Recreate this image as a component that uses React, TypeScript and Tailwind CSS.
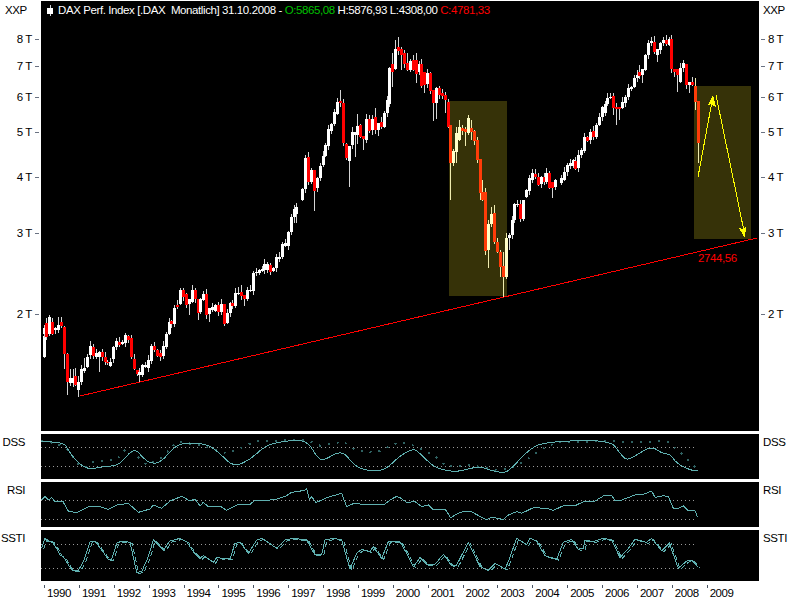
import * as React from 'react';

// candle rows as read off the chart: [x, bodyTop, bodyBottom, red, wickTop?, wickBottom?]
// a section's numbers are 3x pixels, relative to its [baseX, baseY]
type Row = [number, number, number, number, number?, number?];
type Candle = { x: number; top: number; bottom: number; red: boolean; wt: number; wb: number };

const early: Row[] = [
  [129, 408, 470, 0], [133, 385, 402, 0], [138, 370, 410, 1], [147, 352, 402, 0], [156, 365, 402, 1], [165, 385, 390, 0],
  [174, 375, 390, 0, 352], [183, 365, 378, 1, 350], [192, 381, 463, 1, 378, 508], [201, 463, 545, 1, 460, 585], [210, 535, 548, 0, 508],
  [219, 535, 548, 0, 508, 560], [225, 528, 556, 1, 505], [234, 545, 570, 0, 528, 590], [243, 508, 545, 0], [252, 505, 512, 0, 475], [261, 470, 500, 0],
  [270, 438, 465, 0], [279, 440, 467, 1, 432], [288, 460, 472, 0], [297, 455, 470, 0, 452, 515], [306, 455, 472, 1], [315, 472, 487, 1],
  [324, 485, 488, 1], [333, 485, 498, 0], [340, 442, 477, 0], [348, 422, 442, 0], [357, 425, 436, 1], [366, 425, 433, 0], [375, 405, 430, 0, 398],
  [384, 407, 420, 1], [393, 414, 472, 1], [402, 477, 507, 1], [407, 510, 522, 1, 510, 528], [416, 515, 525, 0, 505, 545], [425, 495, 525, 0], [434, 495, 500, 0],
  [443, 480, 505, 0], [452, 438, 482, 0], [461, 438, 450, 1], [470, 450, 467, 1], [479, 460, 472, 1], [488, 438, 467, 0], [497, 403, 440, 0],
  [503, 365, 402, 0], [512, 363, 372, 1], [521, 323, 372, 0], [530, 316, 322, 1], [540, 270, 312, 0, 265], [549, 270, 290, 1, 265], [558, 282, 316, 1],
  [567, 298, 312, 0, 298, 345], [576, 270, 305, 0], [585, 270, 298, 1, 265], [591, 298, 338, 1, 298, 360], [600, 296, 336, 0], [609, 282, 300, 0], [618, 282, 345, 1],
  [627, 325, 343, 0, 325, 365], [636, 322, 330, 0], [645, 315, 332, 0], [654, 316, 335, 1], [663, 312, 335, 0], [672, 312, 372, 1, 312, 378], [681, 338, 370, 0],
  [690, 310, 338, 0], [698, 310, 318, 1], [706, 278, 318, 0], [715, 278, 282, 0, 262], [724, 276, 288, 1, 255], [733, 285, 297, 1, 285, 318], [742, 270, 297, 0],
  [750, 270, 272, 0], [759, 218, 272, 0], [768, 215, 220, 0], [777, 210, 218, 0], [786, 206, 212, 0], [795, 192, 210, 0], [804, 192, 210, 0], [810, 195, 215, 1, 190, 225],
  [819, 205, 212, 0], [828, 172, 205, 0], [837, 172, 178, 0], [846, 132, 172, 0], [855, 130, 138, 0], [864, 95, 138, 0], [873, 52, 95, 0], [882, 28, 52, 0, 15, 68], [891, 20, 42, 0, 10, 68],
];

const late90s: Row[] = [
  [906, 568, 600, 0], [915, 474, 566, 0, 465], [924, 472, 545, 1], [933, 510, 545, 0], [942, 510, 572, 1, 510, 633], [951, 535, 565, 0], [960, 498, 535, 0], [966, 468, 495, 0],
  [975, 435, 468, 0], [984, 388, 438, 0], [993, 372, 392, 0], [1002, 337, 372, 0], [1011, 305, 342, 0, 295], [1020, 303, 310, 1, 270], [1029, 310, 428, 1], [1038, 432, 473, 1],
  [1047, 437, 482, 0, 437, 560], [1056, 397, 434, 0], [1064, 396, 404, 0, 396, 472], [1072, 378, 405, 0, 342, 432], [1080, 376, 412, 1], [1089, 408, 418, 1, 408, 450], [1098, 357, 420, 0],
  [1107, 357, 392, 1, 345], [1116, 357, 390, 0, 345, 405], [1125, 352, 390, 1, 325], [1134, 368, 390, 0, 368, 408], [1143, 366, 382, 1], [1152, 340, 382, 0], [1161, 300, 340, 0, 288],
  [1167, 203, 312, 0], [1176, 192, 215, 1, 160, 260], [1185, 148, 208, 0, 120], [1194, 142, 152, 1, 110],
];

const y2k: Row[] = [
  [3, 148, 165, 1, 140, 210], [12, 158, 192, 1], [21, 190, 210, 1, 160, 213], [30, 183, 210, 0], [39, 180, 210, 1, 165, 212], [46, 180, 222, 1, 160, 250], [54, 192, 216, 0], [63, 192, 258, 1],
  [72, 216, 255, 1, 216, 280], [81, 218, 252, 0], [90, 218, 272, 1], [99, 270, 310, 1, 270, 362], [108, 265, 310, 0, 260, 358], [117, 265, 285, 1], [126, 280, 288, 1], [135, 285, 300, 1, 275, 340], [142, 305, 380, 1],
  [150, 375, 488, 1, 375, 600], [159, 452, 488, 0], [168, 400, 455, 0, 380, 490], [177, 380, 420, 0, 360], [186, 384, 392, 1], [195, 388, 395, 1, 380, 438], [204, 355, 398, 0, 345], [213, 385, 395, 1, 360, 420],
  [222, 393, 422, 1], [231, 420, 480, 1], [237, 478, 578, 1, 478, 600], [246, 575, 600, 1, 540], [253, 575, 600, 1],
];

const lows: Row[] = [
  [255, 0, 152, 1, 0, 165], [264, 72, 150, 0, 60, 205], [273, 42, 72, 0, 22], [282, 40, 125, 1, 15], [291, 125, 155, 1], [300, 155, 200, 1, 150, 230], [309, 198, 232, 1, 155, 290],
  [318, 115, 230, 0], [327, 105, 115, 0, 100, 150], [333, 60, 105, 0], [342, 12, 60, 0], [351, 12, 14, 0, 0], [360, 12, 57, 1, 0, 65], [369, 0, 57, 0, 0, 62],
];

const recovery: Row[] = [
  [378, 570, 590, 0], [387, 535, 572, 0], [396, 520, 540, 0, 508], [405, 522, 530, 1, 508], [414, 532, 555, 1], [423, 532, 552, 0], [432, 530, 545, 1, 518],
  [441, 518, 546, 0], [450, 518, 565, 1], [459, 547, 565, 1, 547, 595], [468, 540, 560, 0], [477, 535, 548, 0], [486, 515, 540, 0], [495, 495, 515, 0], [504, 490, 497, 0], [513, 480, 497, 0],
  [522, 482, 506, 1, 470, 510], [531, 465, 505, 0], [540, 450, 465, 0], [549, 410, 452, 0], [558, 412, 424, 1], [567, 395, 420, 0], [576, 392, 410, 1], [585, 375, 412, 0], [594, 350, 375, 0],
  [603, 322, 352, 0], [612, 312, 340, 0], [621, 295, 312, 0], [630, 290, 295, 0, 278], [639, 288, 323, 1, 278, 345], [648, 322, 328, 1, 310, 375], [657, 322, 326, 1, 322, 360], [666, 305, 325, 0],
  [675, 290, 310, 0], [684, 264, 290, 0], [693, 262, 266, 0], [702, 235, 262, 0], [711, 225, 235, 0], [720, 216, 228, 1, 195], [726, 207, 226, 0, 207, 250], [735, 165, 210, 0], [744, 128, 165, 0],
  [753, 122, 130, 0, 110], [762, 125, 155, 1, 108], [771, 148, 165, 0, 148, 185], [780, 130, 150, 0], [789, 120, 130, 0], [798, 120, 132, 1], [806, 116, 135, 0, 110], [813, 118, 208, 1],
  [822, 208, 215, 1, 208, 230], [830, 208, 225, 1, 208, 275], [840, 205, 245, 0], [849, 190, 205, 0, 180], [858, 192, 255, 1, 192, 268], [867, 245, 255, 0, 245, 280], [876, 245, 255, 1, 232], [885, 258, 305, 1, 235, 330], [892, 303, 430, 1, 303, 488],
];

function section(baseX: number, baseY: number, rows: Row[]): Candle[] {
  return rows.map(([zx, t, b, red, wt, wb], n) => {
    const i = Math.round((baseX + zx / 3 - 43) / 2.907);
    const top = Math.round(baseY + t / 3);
    const bottom = Math.round(baseY + b / 3);
    return {
      x: Math.floor(43 + i * 2.907),
      top,
      bottom: Math.max(bottom, top + 1),
      red: red === 1,
      wt: wt !== undefined ? Math.round(baseY + wt / 3) : top - 1 - ((n * 37) % 5),
      wb: wb !== undefined ? Math.round(baseY + wb / 3) : bottom + 1 + ((n * 23) % 4),
    };
  });
}

const candles: Candle[] = [
  ...section(0, 200, early),
  ...section(0, 0, late90s),
  ...section(400, 0, y2k),
  ...section(400, 200, lows),
  ...section(400, 0, recovery),
];

function shaded(c: Candle) {
  return (c.x >= 449 && c.x < 507 && c.top >= 101) || c.x >= 694;
}

const yTicks = [
  { label: '8 T', y: 39 },
  { label: '7 T', y: 66 },
  { label: '6 T', y: 97 },
  { label: '5 T', y: 132 },
  { label: '4 T', y: 177 },
  { label: '3 T', y: 233 },
  { label: '2 T', y: 314 },
];

const years = Array.from({ length: 20 }, (_, i) => 1990 + i);

// indicator paths, same 3x reading as the candles
type Pt = [number, number];
const toPts = (left: Pt[], right: Pt[]): Pt[] => [
  ...left.map(([x, y]): Pt => [x / 3, 425 + y / 3]),
  ...right.map(([x, y]): Pt => [400 + x / 3, 425 + y / 3]),
];
const toPoints = (pts: Pt[]) => pts.map(([x, y]) => `${x},${y}`).join(' ');

// rounds the corners, the DSS lines are smooth in the chart
function smooth(pts: Pt[]) {
  let d = `M${pts[0][0]} ${pts[0][1]}`;
  for (let i = 1; i < pts.length - 1; i++) {
    const mx = (pts[i][0] + pts[i + 1][0]) / 2;
    const my = (pts[i][1] + pts[i + 1][1]) / 2;
    d += ` Q${pts[i][0]} ${pts[i][1]} ${mx} ${my}`;
  }
  const last = pts[pts.length - 1];
  return `${d} L${last[0]} ${last[1]}`;
}

const dssMain = toPts(
  [[123, 50], [190, 50], [205, 75], [225, 105], [262, 134], [300, 126], [350, 122], [370, 105], [403, 68], [430, 100], [455, 117], [485, 110], [520, 68], [550, 53], [620, 56], [660, 85], [700, 126], [750, 105], [795, 62], [850, 48], [920, 44], [950, 95], [970, 108], [1025, 74], [1060, 118], [1090, 135], [1150, 140], [1200, 92]],
  [[40, 70], [60, 85], [100, 125], [140, 138], [180, 140], [235, 123], [270, 136], [310, 144], [330, 135], [390, 70], [440, 50], [630, 44], [660, 85], [680, 107], [710, 90], [755, 63], [785, 85], [810, 87], [830, 115], [870, 135], [893, 138]],
);
const dssSignal = toPts(
  [[123, 48], [170, 55], [205, 75], [235, 118], [260, 125], [275, 110], [350, 105], [380, 70], [410, 92], [440, 120], [490, 95], [530, 50], [600, 60], [680, 85], [720, 70], [770, 48], [920, 45], [960, 62], [1030, 50], [1070, 78], [1130, 82], [1200, 50]],
  [[50, 65], [100, 90], [140, 125], [210, 120], [290, 135], [330, 132], [370, 110], [420, 75], [470, 52], [640, 48], [680, 52], [800, 48], [840, 80], [890, 132]],
);
const rsiMain = toPts(
  [[125, 225], [135, 215], [145, 225], [155, 218], [165, 230], [188, 228], [205, 258], [230, 263], [270, 243], [300, 245], [325, 253], [350, 240], [385, 235], [415, 262], [450, 252], [460, 240], [485, 250], [510, 228], [545, 214], [570, 228], [585, 222], [600, 243], [610, 232], [625, 245], [660, 243], [680, 256], [710, 240], [750, 238], [765, 225], [810, 225], [830, 222], [860, 212], [875, 202], [915, 196], [920, 190], [928, 222], [935, 215], [948, 233], [980, 218], [1025, 205], [1040, 245], [1060, 236], [1100, 238], [1150, 240], [1175, 222], [1190, 214], [1200, 218]],
  [[20, 232], [45, 230], [65, 245], [85, 240], [100, 255], [135, 252], [152, 278], [180, 262], [210, 258], [260, 285], [275, 276], [310, 284], [325, 270], [350, 260], [365, 265], [400, 248], [440, 250], [460, 256], [495, 240], [525, 242], [555, 228], [585, 228], [610, 213], [635, 212], [645, 226], [660, 227], [710, 208], [730, 208], [755, 198], [765, 217], [790, 212], [805, 215], [820, 250], [835, 250], [850, 243], [865, 257], [885, 258], [893, 277]],
);
const sstiMain = toPts(
  [[125, 370], [135, 340], [145, 350], [155, 348], [170, 370], [180, 390], [190, 395], [215, 435], [235, 436], [250, 410], [270, 350], [285, 348], [305, 375], [325, 403], [335, 403], [350, 355], [365, 348], [390, 352], [410, 442], [425, 440], [445, 395], [460, 345], [490, 375], [510, 348], [540, 340], [560, 350], [580, 380], [600, 400], [610, 392], [640, 412], [650, 398], [690, 402], [705, 355], [720, 352], [745, 385], [770, 345], [785, 340], [830, 370], [855, 345], [880, 340], [920, 345], [945, 390], [965, 388], [975, 345], [1000, 340], [1025, 345], [1050, 432], [1070, 385], [1085, 373], [1110, 380], [1120, 365], [1145, 400], [1165, 350], [1180, 350], [1200, 350]],
  [[20, 385], [40, 425], [60, 398], [80, 418], [105, 418], [130, 388], [155, 422], [170, 420], [205, 352], [240, 425], [265, 436], [285, 415], [315, 432], [325, 410], [350, 340], [380, 360], [390, 340], [410, 348], [435, 392], [470, 403], [490, 352], [515, 343], [535, 373], [550, 370], [555, 345], [580, 350], [610, 340], [635, 345], [660, 398], [685, 370], [705, 343], [740, 352], [755, 340], [785, 377], [808, 355], [835, 430], [860, 408], [875, 405], [893, 425]],
);

function MainChart() {
  return (
    <svg width="718" height="430" viewBox="41 1 718 430" className="block" shapeRendering="crispEdges">
      <rect x="449" y="101" width="58" height="195" fill="#363208" />
      <rect x="694" y="86" width="57" height="153" fill="#363208" />
      {candles.map((c, i) => {
        const hi = shaded(c);
        return (
          <g key={i}>
            <rect x={c.x + 1} y={c.wt} width="1" height={Math.max(c.wb - c.wt, 1)} fill={hi ? '#f0ecb0' : '#d4d4d4'} />
            <rect x={c.x} y={c.top} width="3" height={c.bottom - c.top} fill={c.red ? (hi ? '#ff3c08' : '#ff0000') : hi ? '#ffffc8' : '#ffffff'} />
          </g>
        );
      })}
      <line x1="80" y1="396" x2="757" y2="238" stroke="#ff0000" />
      <polyline points="698,177 713,96" fill="none" stroke="#ffff00" />
      <polygon points="713,95 708,105 711,104 716,107" fill="#ffff00" />
      <polyline points="716,95 745,236" fill="none" stroke="#ffff00" />
      <polygon points="745,238 739,228 743,229 746,226" fill="#ffff00" />
    </svg>
  );
}

function Panel({ label, top, h, className, levels, children }: { label: string; top: number; h: number; className: string; levels: number[]; children: React.ReactNode }) {
  return (
    <div className={`mt-[3px] flex ${className}`}>
      <div className="w-[41px] pr-[16px] pt-[1px] text-right">{label}</div>
      <div className="flex-1 bg-black">
        <svg width="718" height={h} viewBox={`41 ${top} 718 ${h}`} className="block" shapeRendering="crispEdges">
          {levels.map((y) => (
            <line key={y} x1="41" x2="695" y1={y + 0.5} y2={y + 0.5} stroke="#9a9a9a" strokeDasharray="1 3" />
          ))}
          {children}
        </svg>
      </div>
      <div className="w-[41px] pl-[4px] pt-[1px]">{label}</div>
    </div>
  );
}

export default function App() {
  return (
    <div className="flex h-[600px] w-[800px] flex-col overflow-hidden bg-white pt-px font-['Liberation_Sans',Arial,sans-serif] text-[11.5px] leading-[14px] tracking-[-0.4px] text-black">
      <div className="flex h-[430px]">
        <div className="relative w-[41px]">
          <div className="pl-[5px] pt-[2px]">XXP</div>
          {yTicks.map((t) => (
            <div key={t.label} className="absolute right-[2px] flex items-center gap-[3px]" style={{ top: t.y - 8 }}>
              <span>{t.label}</span>
              <span className="h-px w-[4px] bg-gray-500" />
            </div>
          ))}
        </div>
        <div className="relative flex-1 bg-black">
          <MainChart />
          <div className="absolute left-[6px] top-[2px] flex items-center gap-[5px] whitespace-pre text-white">
            <span className="relative h-[11px] w-[6px]">
              <span className="absolute left-[2.5px] top-0 h-[11px] w-px bg-gray-300" />
              <span className="absolute left-0 top-[3px] h-[6px] w-[6px] bg-white" />
            </span>
            <span>
              DAX Perf. Index [.DAX  Monatlich] 31.10.2008 - <span className="text-[#00c000]">O:5865,08</span> H:5876,93 L:4308,00{' '}
              <span className="text-[#ff0000]">C:4781,33</span>
            </span>
          </div>
          <div className="absolute left-[657px] top-[250px] text-[#ff0000]">2744,56</div>
        </div>
        <div className="relative w-[41px]">
          <div className="pl-[4px] pt-[2px]">XXP</div>
          {yTicks.map((t) => (
            <div key={t.label} className="absolute left-[2px] flex items-center gap-[3px]" style={{ top: t.y - 8 }}>
              <span className="h-px w-[4px] bg-gray-500" />
              <span>{t.label}</span>
            </div>
          ))}
        </div>
      </div>

      <Panel label="DSS" top={434} h={45} className="h-[45px]" levels={[447, 466]}>
        <polyline points={toPoints(dssSignal)} fill="none" stroke="#2f6262" strokeWidth="2" strokeDasharray="2 7" />
        <path d={smooth(dssMain)} fill="none" stroke="#5fb0b0" />
      </Panel>
      <Panel label="RSI" top={482} h={45} className="h-[45px]" levels={[500, 519]}>
        <polyline points={toPoints(rsiMain)} fill="none" stroke="#5fb0b0" />
      </Panel>
      <Panel label="SSTI" top={530} h={51} className="h-[51px]" levels={[544, 568]}>
        <polyline points={toPoints(sstiMain)} fill="none" stroke="#5fb0b0" strokeDasharray="5 3" transform="translate(2 1)" />
        <polyline points={toPoints(sstiMain)} fill="none" stroke="#5fb0b0" />
      </Panel>

      <div className="flex pl-[44px] pt-[4px]">
        {years.map((y) => (
          <div key={y} className="flex w-[34.88px] shrink-0">
            <span className="h-[3px] w-px bg-gray-600" />
            <span className="pl-[2px] pt-[1px]">{y}</span>
          </div>
        ))}
      </div>
    </div>
  );
}
